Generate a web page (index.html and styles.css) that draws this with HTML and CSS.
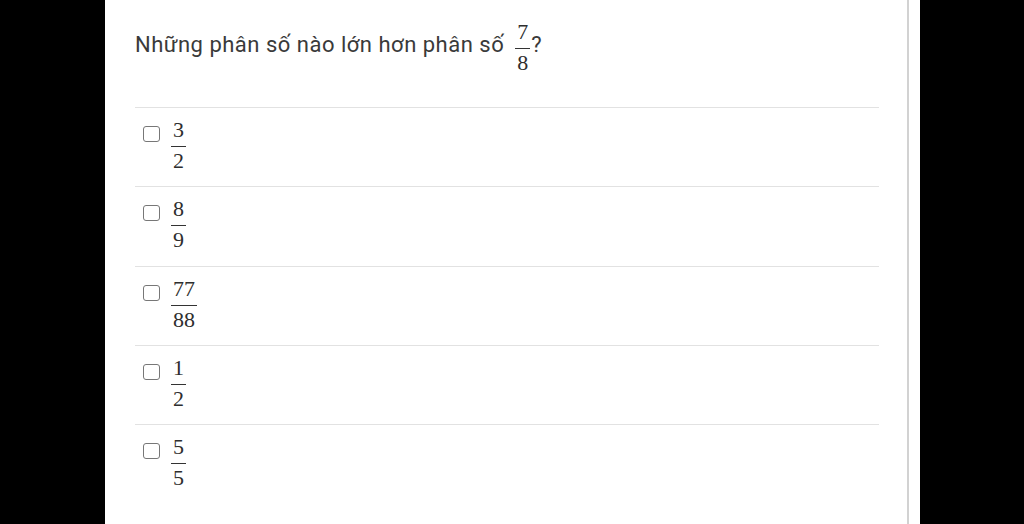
FILE: index.html
```html
<!DOCTYPE html>
<html lang="vi">
<head>
  <meta charset="UTF-8">
  <meta name="viewport" content="width=device-width, initial-scale=1.0">
  <title>Câu hỏi phân số</title>
  <link rel="stylesheet" href="styles.css">
</head>
<body>

  <div class="sheet">
    <div class="panel">

      <div class="question">
        <span class="q-text">Những phân số nào lớn hơn phân số</span>
        <span class="frac">
          <span class="num">7</span>
          <span class="den">8</span>
        </span>
        <span class="q-mark">?</span>
      </div>

      <div class="options">
        <label class="option">
          <input type="checkbox" class="box">
          <span class="frac">
            <span class="num">3</span>
            <span class="den">2</span>
          </span>
        </label>
        <label class="option">
          <input type="checkbox" class="box">
          <span class="frac">
            <span class="num">8</span>
            <span class="den">9</span>
          </span>
        </label>
        <label class="option">
          <input type="checkbox" class="box">
          <span class="frac">
            <span class="num">77</span>
            <span class="den">88</span>
          </span>
        </label>
        <label class="option">
          <input type="checkbox" class="box">
          <span class="frac">
            <span class="num">1</span>
            <span class="den">2</span>
          </span>
        </label>
        <label class="option">
          <input type="checkbox" class="box">
          <span class="frac">
            <span class="num">5</span>
            <span class="den">5</span>
          </span>
        </label>
      </div>

    </div>
  </div>

</body>
</html>
```

FILE: styles.css
```css
html, body {
  height: 100%;
}
body {
  margin: 0;
  background: #000000;
  font-family: Roboto, "Noto Sans", sans-serif;
  color: #3a3a3a;
  overflow: hidden;
}

.sheet {
  margin-left: 105px;
  width: 815px;
  height: 100%;
  background: #ffffff;
}
.panel {
  box-sizing: border-box;
  width: 804px;
  height: 100%;
  padding: 0 28px 0 30px;
  border-right: 2px solid #d2d2d2;
}

/* question line */
.question {
  display: flex;
  align-items: flex-start;
  padding-top: 21px;
  padding-bottom: 34px;
  font-size: 22px;
  letter-spacing: 0.5px;
  line-height: 24px;
}
.q-text {
  margin-top: 12px;
  margin-right: 11px;
}
.q-mark {
  margin-top: 12px;
  margin-left: 1px;
}

/* fractions */
.frac {
  display: inline-flex;
  flex-direction: column;
  align-items: center;
  padding: 0 1px;
  font-family: "Liberation Serif", "DejaVu Serif", serif;
  font-size: 22px;
  line-height: 21px;
  letter-spacing: 0;
  color: #2e2e2e;
}
.num {
  padding: 0 1px 6px;
  border-bottom: 1px solid #333333;
  width: 100%;
  text-align: center;
}
.den {
  padding-top: 3px;
}

/* options */
.option {
  display: flex;
  align-items: flex-start;
  gap: 11px;
  box-sizing: border-box;
  height: 79.25px;
  padding-top: 11px;
  padding-left: 8px;
  border-top: 1px solid #e2e2e2;
  cursor: pointer;
}
.box {
  appearance: none;
  -webkit-appearance: none;
  width: 17px;
  height: 16px;
  margin: 7px 0 0;
  border: 1.5px solid #777777;
  border-radius: 3px;
  background: #ffffff;
}
```
